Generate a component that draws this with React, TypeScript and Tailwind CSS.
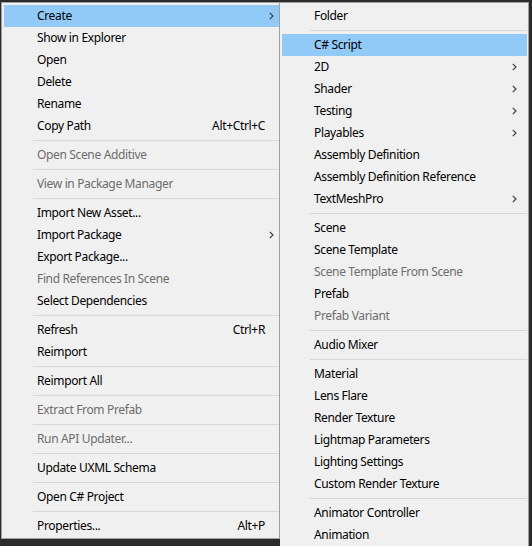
import { FunctionComponent } from "react";

type MenuEntry =
  | { sep: true }
  | {
      sep?: false;
      label: string;
      shortcut?: string;
      sub?: boolean;
      disabled?: boolean;
      active?: boolean;
    };

const mainItems: MenuEntry[] = [
  { label: "Create", sub: true, active: true },
  { label: "Show in Explorer" },
  { label: "Open" },
  { label: "Delete" },
  { label: "Rename" },
  { label: "Copy Path", shortcut: "Alt+Ctrl+C" },
  { sep: true },
  { label: "Open Scene Additive", disabled: true },
  { sep: true },
  { label: "View in Package Manager", disabled: true },
  { sep: true },
  { label: "Import New Asset..." },
  { label: "Import Package", sub: true },
  { label: "Export Package..." },
  { label: "Find References In Scene", disabled: true },
  { label: "Select Dependencies" },
  { sep: true },
  { label: "Refresh", shortcut: "Ctrl+R" },
  { label: "Reimport" },
  { sep: true },
  { label: "Reimport All" },
  { sep: true },
  { label: "Extract From Prefab", disabled: true },
  { sep: true },
  { label: "Run API Updater...", disabled: true },
  { sep: true },
  { label: "Update UXML Schema" },
  { sep: true },
  { label: "Open C# Project" },
  { sep: true },
  { label: "Properties...", shortcut: "Alt+P" },
];

const createItems: MenuEntry[] = [
  { label: "Folder" },
  { sep: true },
  { label: "C# Script", active: true },
  { label: "2D", sub: true },
  { label: "Shader", sub: true },
  { label: "Testing", sub: true },
  { label: "Playables", sub: true },
  { label: "Assembly Definition" },
  { label: "Assembly Definition Reference" },
  { label: "TextMeshPro", sub: true },
  { sep: true },
  { label: "Scene" },
  { label: "Scene Template" },
  { label: "Scene Template From Scene", disabled: true },
  { label: "Prefab" },
  { label: "Prefab Variant", disabled: true },
  { sep: true },
  { label: "Audio Mixer" },
  { sep: true },
  { label: "Material" },
  { label: "Lens Flare" },
  { label: "Render Texture" },
  { label: "Lightmap Parameters" },
  { label: "Lighting Settings" },
  { label: "Custom Render Texture" },
  { sep: true },
  { label: "Animator Controller" },
  { label: "Animation" },
];

const Chevron = () => (
  <svg width="5" height="8" viewBox="0 0 5 8" className="shrink-0">
    <path d="M0.8 0.8 L4 4 L0.8 7.2" fill="none" stroke="#3c3c3c" strokeWidth="1.2" />
  </svg>
);

interface MenuListProps {
  items: MenuEntry[];
  textPad: string;
  sepPad: string;
  arrowPad: string;
}

const MenuList: FunctionComponent<MenuListProps> = ({ items, textPad, sepPad, arrowPad }) => {
  return (
    <>
      {items.map((item, i) =>
        item.sep ? (
          <div key={i} className={`h-[7px] flex items-center ${sepPad}`}>
            <div className="h-px w-full bg-[#d7d7d7]" />
          </div>
        ) : (
          <div
            key={i}
            className={`h-[22px] flex items-center ${textPad} ${
              item.active ? "bg-[#91c9f7]" : ""
            } ${item.disabled ? "text-[#6d6d6d]" : "text-black"}`}
          >
            <span className="flex-1 whitespace-nowrap">{item.label}</span>
            {item.shortcut && <span className="whitespace-nowrap pr-[14px]">{item.shortcut}</span>}
            {item.sub && (
              <span className={arrowPad}>
                <Chevron />
              </span>
            )}
          </div>
        )
      )}
    </>
  );
};

export default function App() {
  return (
    <div
      className="w-[532px] h-[546px] overflow-hidden bg-[#2b2b2b] text-[12px] leading-none tracking-[-0.35px]"
      style={{ fontFamily: '"Noto Sans", "Segoe UI", sans-serif' }}
    >
      <div className="flex items-start pt-[2px]">
        <div className="ml-px w-[279px] bg-[#f0f0f0] border border-[#a0a0a0] pl-[2px] pr-0 pt-[2px] pb-px">
          <MenuList items={mainItems} textPad="pl-[33px]" sepPad="pl-[29px]" arrowPad="pr-[5px]" />
        </div>
        <div className="w-[249px] bg-[#f0f0f0] border-y border-r border-[#a0a0a0] pl-[2px] pr-px pt-[2px]">
          <MenuList items={createItems} textPad="pl-[32px]" sepPad="pl-[28px]" arrowPad="pr-[10px]" />
        </div>
      </div>
    </div>
  );
}
